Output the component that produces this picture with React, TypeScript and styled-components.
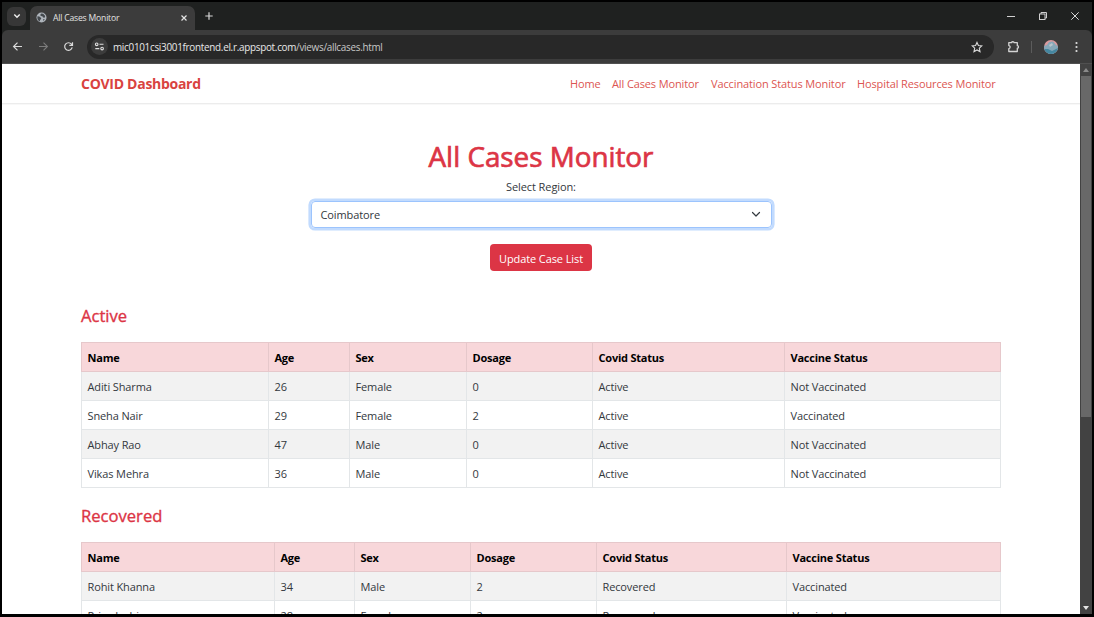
import React from "react";
import styled, { createGlobalStyle } from "styled-components";

const Global = createGlobalStyle`
  * { box-sizing: border-box; }
  body { margin: 0; background: #000; overflow: hidden; }
  h1, h2, p { margin: 0; }
  svg { display: block; flex: none; }
`;

const Window = styled.div`
  width: 1094px;
  height: 617px;
  padding: 2px 2px 3px;
  background: #000;
  display: flex;
  flex-direction: column;
  font-family: "Open Sans", "Noto Sans", sans-serif;
  overflow: hidden;
`;

const TabStrip = styled.div`
  height: 28px;
  flex: none;
  background: #1f2120;
  display: flex;
  align-items: center;
  padding-left: 5px;
  color: #e3e3e3;
`;

const TabSearch = styled.div`
  width: 19px;
  height: 19px;
  border-radius: 6px;
  background: #373737;
  display: grid;
  place-items: center;
`;

const Tab = styled.div`
  width: 165px;
  height: 24px;
  margin-left: 4px;
  align-self: flex-end;
  background: #3c3c3c;
  border-radius: 7px 7px 0 0;
  display: flex;
  align-items: center;
  padding: 0 7px 1px 6px;
  gap: 6px;
`;

const TabTitle = styled.span`
  flex: 1;
  font-size: 8.6px;
  line-height: 12px;
  letter-spacing: -0.19px;
  white-space: nowrap;
`;

const NewTab = styled.div`
  width: 10px;
  margin-left: 9px;
`;

const WindowButtons = styled.div`
  margin-left: auto;
  padding-right: 12px;
  display: flex;
  align-items: center;
  gap: 22px;
`;

const ToolbarBack = styled.div`
  flex: none;
  background: #1f2120;
`;

const Toolbar = styled.div`
  height: 34px;
  background: #3c3c3c;
  border-bottom: 1px solid #505050;
  border-radius: 6px 6px 0 0;
  display: flex;
  align-items: center;
  padding: 0 10px 0 10px;
`;

const NavButtons = styled.div`
  display: flex;
  gap: 14.5px;
  width: 75px;
`;

const AddressBar = styled.div`
  width: 907px;
  height: 24px;
  border-radius: 12px;
  background: #282828;
  display: flex;
  align-items: center;
  padding: 0 11px 0 4px;
`;

const SiteInfo = styled.div`
  width: 17px;
  height: 17px;
  border-radius: 50%;
  background: #3c3c3c;
  display: grid;
  place-items: center;
`;

const Address = styled.span`
  flex: 1;
  margin-left: 5px;
  font-size: 9.9px;
  line-height: 14px;
  letter-spacing: -0.28px;
  color: #c7c7c7;
  white-space: nowrap;
`;

const Host = styled.span`
  color: #e8e8e8;
`;

const ToolbarEnd = styled.div`
  display: flex;
  align-items: center;
  margin-left: 13px;
`;

const Divider = styled.div`
  width: 1px;
  height: 12px;
  margin: 0 12px 0 11px;
  background: #5c5c5c;
`;

const Avatar = styled.div`
  width: 14px;
  height: 14px;
  margin-right: 17px;
`;

const Viewport = styled.div`
  flex: 1;
  min-height: 0;
  display: flex;
`;

const Page = styled.main`
  width: 1078px;
  background: #fff;
  overflow: hidden;
  color: #33383d;
`;

const Scrollbar = styled.div`
  width: 12px;
  background: #424242;
  display: flex;
  flex-direction: column;
  align-items: center;
`;

const ScrollArrow = styled.div`
  height: 12px;
  display: grid;
  place-items: center;
`;

const Thumb = styled.div`
  width: 10px;
  height: 341px;
  margin-bottom: auto;
  background: #686868;
`;

const Navbar = styled.header`
  height: 40px;
  border-bottom: 1px solid #ececec;
  box-shadow: 0 1px 0 #f8f8f8;
  display: flex;
  align-items: center;
  padding: 1px 0 0 79px;
`;

const Brand = styled.div`
  width: 489px;
  font-size: 14px;
  font-weight: 700;
  letter-spacing: -0.28px;
  line-height: 20px;
  color: #d9433f;
  white-space: nowrap;
`;

const NavLink = styled.a<{ $w: number }>`
  width: ${(p) => p.$w}px;
  font-size: 11px;
  line-height: 16px;
  letter-spacing: -0.12px;
  color: #dc5551;
  white-space: nowrap;
`;

const Hero = styled.section`
  height: 200px;
  padding-top: 32px;
  display: flex;
  flex-direction: column;
  align-items: center;
`;

const Title = styled.h1`
  font-size: 27.8px;
  line-height: 40px;
  font-weight: 500;
  -webkit-text-stroke: 0.7px #dc3545;
  color: #dc3545;
  white-space: nowrap;
`;

const Label = styled.label`
  margin-top: 3px;
  font-size: 11px;
  line-height: 16px;
  letter-spacing: -0.1px;
`;

const Select = styled.div`
  width: 461px;
  height: 27px;
  margin-top: 6px;
  border: 1px solid #9cc4fd;
  border-radius: 4px;
  box-shadow: 0 0 0 2.6px #c2dbfe;
  display: flex;
  align-items: center;
  justify-content: space-between;
  padding: 0 10px 0 9px;
  font-size: 11px;
  line-height: 16px;
  letter-spacing: -0.1px;
`;

const UpdateButton = styled.button`
  width: 102px;
  height: 27px;
  margin-top: 16px;
  padding: 2px 0 0;
  border: 0;
  border-radius: 4px;
  background: #dc3545;
  color: #fff;
  font: 11px/16px "Open Sans", sans-serif;
  letter-spacing: -0.1px;
  white-space: nowrap;
`;

const Section = styled.section`
  height: 200px;
  margin-left: 79px;
  width: 920px;
`;

const Heading = styled.h2`
  font-size: 16.6px;
  line-height: 24px;
  margin-bottom: 14px;
  font-weight: 500;
  -webkit-text-stroke: 0.35px #dc3545;
  color: #dc3545;
`;

const Table = styled.table`
  width: 920px;
  table-layout: fixed;
  border-collapse: collapse;
  font-size: 11px;
`;

const HeadCell = styled.th<{ $w: number }>`
  width: ${(p) => p.$w}px;
  height: 29px;
  padding: 1px 5.5px 0;
  background: #f8d7da;
  border: 1px solid #e6c8cb;
  text-align: left;
  font-weight: 700;
  line-height: 16px;
  letter-spacing: -0.22px;
  color: #000;
`;

const Row = styled.tr`
  &:nth-child(odd) { background: #f2f2f2; }
`;

const Cell = styled.td`
  height: 29px;
  padding: 1px 5.5px 0;
  border: 1px solid #e3e6e8;
  line-height: 16px;
  letter-spacing: -0.12px;
`;

const columns = ["Name", "Age", "Sex", "Dosage", "Covid Status", "Vaccine Status"];

const links: [string, number][] = [
  ["Home", 42],
  ["All Cases Monitor", 99],
  ["Vaccination Status Monitor", 146],
  ["Hospital Resources Monitor", 140],
];

const active = [
  ["Aditi Sharma", "26", "Female", "0", "Active", "Not Vaccinated"],
  ["Sneha Nair", "29", "Female", "2", "Active", "Vaccinated"],
  ["Abhay Rao", "47", "Male", "0", "Active", "Not Vaccinated"],
  ["Vikas Mehra", "36", "Male", "0", "Active", "Not Vaccinated"],
];

const recovered = [
  ["Rohit Khanna", "34", "Male", "2", "Recovered", "Vaccinated"],
  ["Priya Joshi", "28", "Female", "2", "Recovered", "Vaccinated"],
];

function CaseTable({ title, widths, rows }: { title: string; widths: number[]; rows: string[][] }) {
  return (
    <Section>
      <Heading>{title}</Heading>
      <Table>
        <thead>
          <tr>{columns.map((c, i) => <HeadCell key={c} $w={widths[i]}>{c}</HeadCell>)}</tr>
        </thead>
        <tbody>
          {rows.map((r) => (
            <Row key={r[0]}>{r.map((v, i) => <Cell key={i}>{v}</Cell>)}</Row>
          ))}
        </tbody>
      </Table>
    </Section>
  );
}

export default function App() {
  return (
    <Window>
      <Global />
      <TabStrip>
        <TabSearch>
          <svg width="8" height="6" viewBox="0 0 8 6" fill="none" stroke="#f0f0f0" strokeWidth="1.4"><path d="M1.3 1.5 4 4.2l2.7-2.7" /></svg>
        </TabSearch>
        <Tab>
          <svg width="11" height="11" viewBox="0 0 11 11">
            <circle cx="5.5" cy="5.5" r="5" fill="#aeb4bb" />
            <path d="M1.5 4.3 3.3 4.5 5.2 6.1 5 7.3 4.1 7.7 3.9 9.5C2 8.9.9 6.8 1.5 4.3ZM5.2 1.5l2 .2 2 2.3-.6 1.7-1.5-.2-.7-1.2-1.7-.3-.4-1.3ZM7.2 7l1.6.2-1.5 1.9Z" fill="#43484d" />
          </svg>
          <TabTitle>All Cases Monitor</TabTitle>
          <svg width="8" height="8" viewBox="0 0 8 8" stroke="#e3e3e3" strokeWidth="1.2"><path d="m1.5 1.5 5 5m0-5-5 5" /></svg>
        </Tab>
        <NewTab>
          <svg width="10" height="10" viewBox="0 0 10 10" stroke="#d8d8d8" strokeWidth="1.2"><path d="M5 1.3v7.4M1.3 5h7.4" /></svg>
        </NewTab>
        <WindowButtons>
          <svg width="10" height="10" viewBox="0 0 10 10" stroke="#d0d0d0"><path d="M1 5.5h8" /></svg>
          <svg width="10" height="10" viewBox="0 0 10 10" fill="none" stroke="#d0d0d0"><rect x="1.5" y="3" width="5.5" height="5.5" /><path d="M3 3V1.5h5.5V7H7" /></svg>
          <svg width="10" height="10" viewBox="0 0 10 10" stroke="#d8d8d8"><path d="m1.3 1.3 7.4 7.4m0-7.4L1.3 8.7" /></svg>
        </WindowButtons>
      </TabStrip>
      <ToolbarBack>
        <Toolbar>
          <NavButtons>
            <svg width="11" height="11" viewBox="0 0 11 11" fill="none" stroke="#dadada" strokeWidth="1.2"><path d="M10 5.5H1.8M5.5 1.6 1.6 5.5l3.9 3.9" /></svg>
            <svg width="11" height="11" viewBox="0 0 11 11" fill="none" stroke="#7c7c7c" strokeWidth="1.1"><path d="M1 5.5h8.2M5.5 1.6l3.9 3.9-3.9 3.9" /></svg>
            <svg width="11" height="11" viewBox="0 0 11 11" fill="none" stroke="#dadada" strokeWidth="1.2"><path d="M9.2 6.4A3.8 3.8 0 1 1 8.5 3.2L9.3 4.2M9.5 1.2v3.2H6.3" /></svg>
          </NavButtons>
          <AddressBar>
            <SiteInfo>
              <svg width="11" height="11" viewBox="0 0 11 11" fill="none" stroke="#dedede" strokeWidth="1.1"><circle cx="2.7" cy="3.3" r="1.3" /><path d="M5.5 3.3h4M1.3 7.6h4" /><circle cx="8.1" cy="7.6" r="1.3" /></svg>
            </SiteInfo>
            <Address><Host>mic0101csi3001frontend.el.r.appspot.com</Host>/views/allcases.html</Address>
            <svg width="12" height="12" viewBox="0 0 12 12" fill="none" stroke="#dadada" strokeWidth="1.1"><path d="m6 1.4 1.4 3.1 3.4.4-2.5 2.3.7 3.4-3-1.7-3 1.7.7-3.4L1.2 4.9l3.4-.4Z" /></svg>
          </AddressBar>
          <ToolbarEnd>
            <svg width="13" height="13" viewBox="0 0 13 13" fill="none" stroke="#d4d4d4" strokeWidth="1.3" strokeLinejoin="round"><path d="M1.8 2.7h2.9c0-1.5 2.4-1.5 2.4 0h3.2v3c1.6 0 1.6 2.4 0 2.4v3.4H1.8V8.6c1.8 0 1.8-3 0-3Z" /></svg>
            <Divider />
            <Avatar>
              <svg width="14" height="14" viewBox="0 0 14 14">
                <defs><clipPath id="face"><circle cx="7" cy="7" r="7" /></clipPath></defs>
                <g clipPath="url(#face)">
                  <path fill="#d99a9e" d="M0 0h14v14H0z" />
                  <path fill="#86a7b8" d="m0 6 3-1 2-3 4-.5L12 5l2 1v8H0Z" />
                  <path fill="#4587a0" d="m0 9 4 0 4 2 6-3v6H0Z" />
                  <path fill="#b8c4cc" d="m5 5 3-2 1 2-3 2Z" />
                </g>
              </svg>
            </Avatar>
            <svg width="3" height="12" viewBox="0 0 3 12" fill="#dedede"><circle cx="1.5" cy="2" r="1.1" /><circle cx="1.5" cy="6" r="1.1" /><circle cx="1.5" cy="10" r="1.1" /></svg>
          </ToolbarEnd>
        </Toolbar>
      </ToolbarBack>
      <Viewport>
        <Page>
          <Navbar>
            <Brand>COVID Dashboard</Brand>
            {links.map(([t, w]) => <NavLink key={t} $w={w}>{t}</NavLink>)}
          </Navbar>
          <Hero>
            <Title>All Cases Monitor</Title>
            <Label>Select Region:</Label>
            <Select>
              Coimbatore
              <svg width="10" height="8" viewBox="0 0 10 8" fill="none" stroke="#343a40" strokeWidth="1.2" strokeLinecap="round" strokeLinejoin="round"><path d="m1.5 1.5 3.5 3.5 3.5-3.5" /></svg>
            </Select>
            <UpdateButton>Update Case List</UpdateButton>
          </Hero>
          <CaseTable title="Active" widths={[187, 81, 117, 126, 192, 216]} rows={active} />
          <CaseTable title="Recovered" widths={[193, 80, 116, 126, 190, 214]} rows={recovered} />
        </Page>
        <Scrollbar>
          <ScrollArrow><svg width="6" height="4" viewBox="0 0 6 4"><path fill="#8a8a8a" d="M3 0 6 4H0Z" /></svg></ScrollArrow>
          <Thumb />
          <ScrollArrow><svg width="6" height="4" viewBox="0 0 6 4"><path fill="#e4e4e4" d="M3 4 6 0H0Z" /></svg></ScrollArrow>
        </Scrollbar>
      </Viewport>
    </Window>
  );
}
